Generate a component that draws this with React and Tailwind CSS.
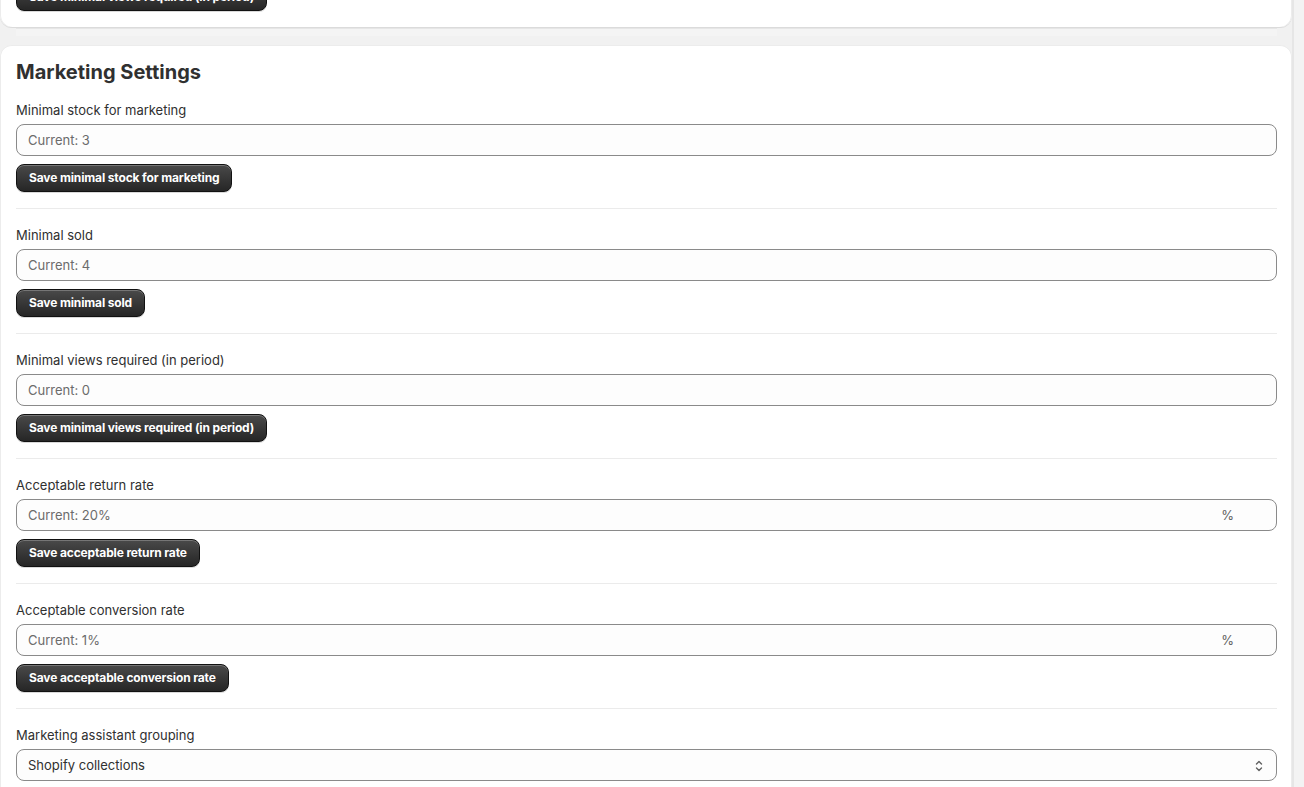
import React from "react";

const sections = [
  { label: "Minimal stock for marketing", value: "Current: 3", button: "Save minimal stock for marketing" },
  { label: "Minimal sold", value: "Current: 4", button: "Save minimal sold" },
  { label: "Minimal views required (in period)", value: "Current: 0", button: "Save minimal views required (in period)" },
  { label: "Acceptable return rate", value: "Current: 20%", button: "Save acceptable return rate", suffix: "%" },
  { label: "Acceptable conversion rate", value: "Current: 1%", button: "Save acceptable conversion rate", suffix: "%" },
];

function DarkButton({ children }) {
  return (
    <button
      type="button"
      className="h-[28px] px-3 rounded-lg text-white text-[12px] font-bold leading-4 tracking-[-0.14px] bg-gradient-to-b from-[#4a4a4a] to-[#262626] border border-[#111] shadow-[inset_0_1px_0_0_rgba(255,255,255,0.25),0_1px_0_0_rgba(0,0,0,0.15)] whitespace-nowrap"
    >
      {children}
    </button>
  );
}

function Section({ label, value, button, suffix }) {
  return (
    <div className="flex flex-col">
      <div className="text-[13px] leading-5 text-[#303030]">{label}</div>
      <div className="mt-1 h-[32px] rounded-lg border border-[#8a8a8a] bg-[#fdfdfd] flex items-center pt-px pl-[11px] pr-[42px]">
        <span className="flex-1 text-[13px] text-[#6b6b6b]">{value}</span>
        {suffix && <span className="text-[13px] text-[#616161]">{suffix}</span>}
      </div>
      <div className="mt-2 flex">
        <DarkButton>{button}</DarkButton>
      </div>
      <div className="mt-4 mb-4 h-px bg-[#ebebeb]" />
    </div>
  );
}

export default function App() {
  return (
    <div
      className="w-[1304px] h-[787px] overflow-hidden bg-[#f1f1f1] flex"
      style={{ fontFamily: "Inter, 'Noto Sans', sans-serif" }}
    >
      <div className="w-[1292px] flex flex-col">
        <div className="bg-white rounded-b-xl px-4 pb-4 shadow-[0_1px_0_0_rgba(26,26,26,0.1),inset_1px_0_0_0_#ececec,inset_-1px_0_0_0_#ececec]">
          <div className="-mt-[17px] flex">
            <DarkButton>Save minimal views required (in period)</DarkButton>
          </div>
        </div>
        <div className="mt-px mx-4 mr-[15px] h-[8px] bg-[#f4f4f4] border-t border-[#e6e6e6]" />
        <div className="mt-[9px] flex-1 bg-white rounded-t-xl pl-4 pr-[15px] pt-[15px] shadow-[inset_1px_0_0_0_#ececec,inset_-1px_0_0_0_#ececec,inset_0_1px_0_0_#ececec]">
          <h2 className="text-[20px] leading-6 font-bold text-[#303030]">Marketing Settings</h2>
          <div className="mt-4 flex flex-col">
            {sections.map((s) => (
              <Section key={s.label} {...s} />
            ))}
            <div className="flex flex-col">
              <div className="text-[13px] leading-5 text-[#303030]">Marketing assistant grouping</div>
              <div className="mt-1 h-[32px] rounded-lg border border-[#8a8a8a] bg-[#fdfdfd] flex items-center pt-px pl-[11px] pr-[11px]">
                <span className="flex-1 text-[13px] text-[#303030]">Shopify collections</span>
                <svg width="12" height="16" viewBox="0 0 12 16" fill="none" stroke="#616161" strokeWidth="1.4" strokeLinecap="round" strokeLinejoin="round">
                  <path d="M3.5 6 6 3.5 8.5 6" />
                  <path d="M3.5 10 6 12.5 8.5 10" />
                </svg>
              </div>
            </div>
          </div>
        </div>
      </div>
      <div className="w-[12px] border-l-2 border-[#e6e6e6] bg-[#f3f3f3]" />
    </div>
  );
}
